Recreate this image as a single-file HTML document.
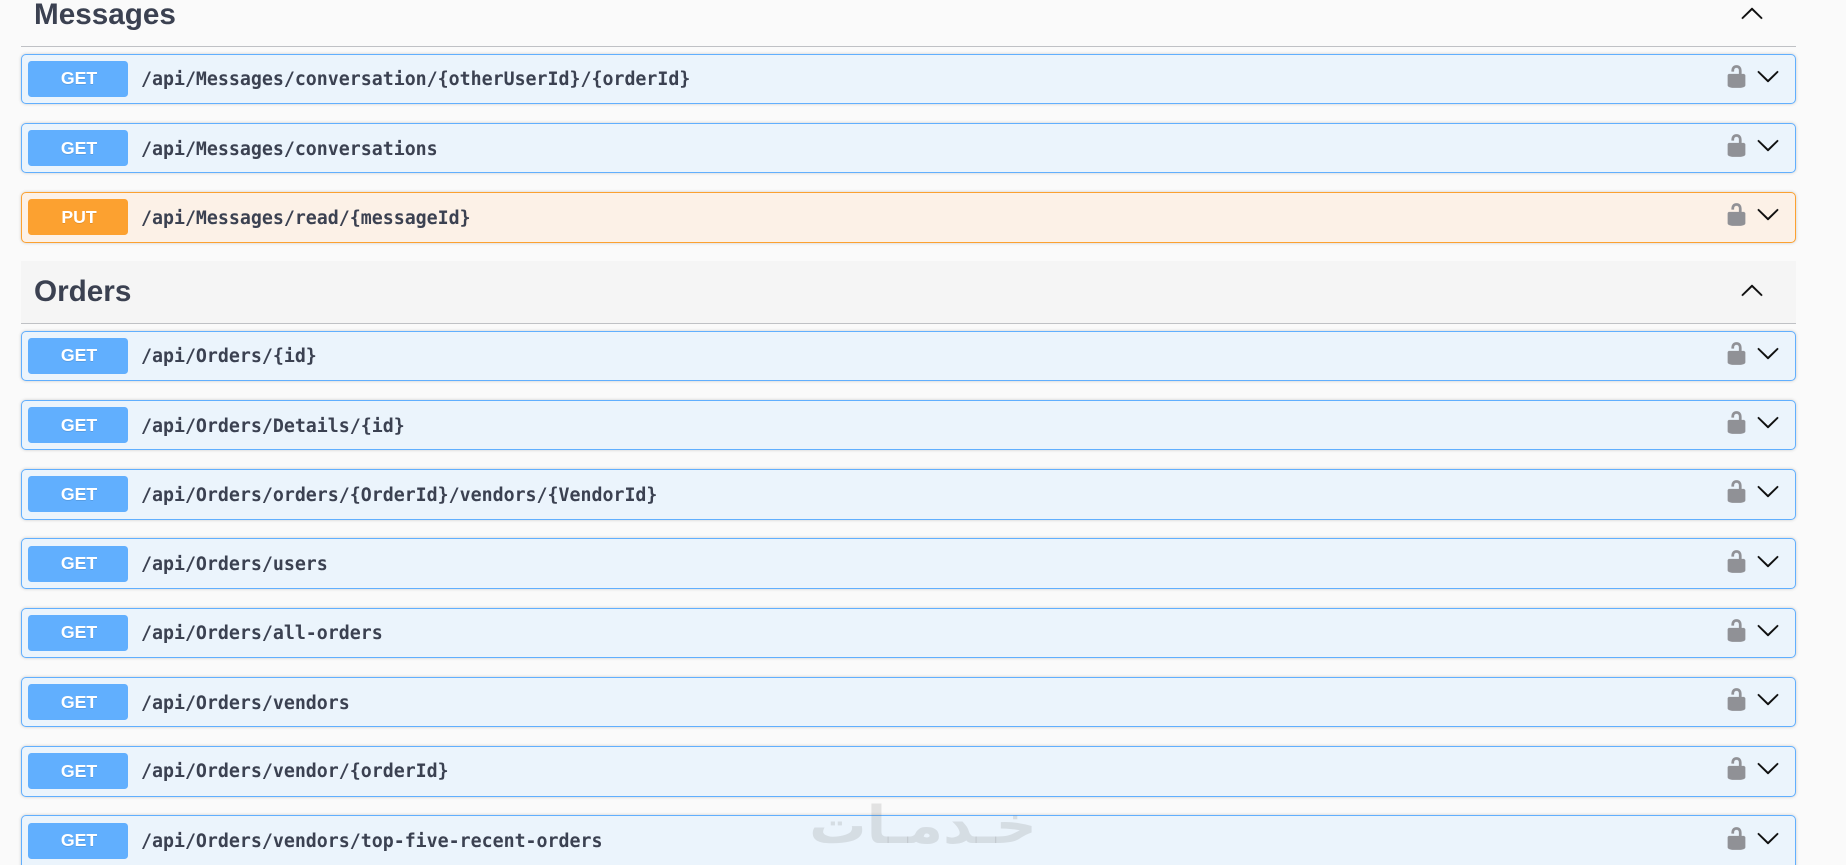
<!DOCTYPE html>
<html><head><meta charset="utf-8"><style>
html,body{margin:0;padding:0;width:1846px;height:865px;overflow:hidden;background:#fafafa}
body{position:relative;font-family:"Liberation Sans",sans-serif}
.h{position:absolute;left:34px;font-weight:700;font-size:29.7px;line-height:33px;color:#3b4151}
.ln{position:absolute;left:21px;width:1775px;height:1px;background:#bfc1c5}
.hb{position:absolute;left:21px;width:1775px;top:261px;height:62px;background:#f5f5f5}
.r{position:absolute;left:21px;width:1775px;box-sizing:border-box;border:1px solid #61affe;border-radius:5px;background:#ebf4fc;box-shadow:0 0 3px rgba(0,0,0,.19)}
.r.p{border-color:#fca130;background:#fcf1e7}
.b{position:absolute;left:28px;width:100px;height:36px;border-radius:3.5px;background:#61affe}
.b.o{background:#fca130}
.g{position:absolute;left:29px;width:100px;text-align:center;color:#fff;font-weight:700;font-size:17.7px;line-height:20px;text-shadow:0 1px 0 rgba(0,0,0,.1)}
.t{position:absolute;left:141px;font-family:"DejaVu Sans Mono","Liberation Mono",monospace;font-weight:700;font-size:18.25px;line-height:21px;color:#3b4151;white-space:pre}
.l{position:absolute;left:1724px;width:25px;height:25px;fill:#909196;stroke:#909196;stroke-width:.2}
.c{position:absolute;left:1756px;width:24px;height:24px;fill:#111;stroke:#111;stroke-width:.25}
.u{position:absolute;left:1740px;width:24px;height:24px;fill:#111;stroke:#111;stroke-width:.25;transform:rotate(180deg)}
.w{position:absolute;left:773px;top:796px;width:300px;height:60px;text-align:center;font-family:"DejaVu Sans",sans-serif;font-weight:700;font-size:52px;line-height:60px;color:rgba(107,107,107,.17);transform:scaleX(1.1);white-space:nowrap}
</style></head><body>
<svg width="0" height="0" style="position:absolute"><defs>
<symbol id="lk" viewBox="0 0 20 20"><path d="M15.8 8H14V5.6C14 2.703 12.665 1 10 1 7.334 1 6 2.703 6 5.6V6h2v-.801C8 3.754 8.797 3 10 3c1.203 0 2 .754 2 2.199V8H4c-.553 0-1 .646-1 1.199V17c0 .549.428 1.139.951 1.307l1.197.387C5.672 18.861 6.55 19 7.1 19h5.8c.549 0 1.428-.139 1.951-.307l1.196-.387c.524-.167.953-.757.953-1.306V9.199C17 8.646 16.352 8 15.8 8z"/></symbol>
<symbol id="ch" viewBox="0 0 20 20"><path d="M17.418 6.109c.272-.268.709-.268.979 0s.271.701 0 .969l-7.908 7.83c-.27.268-.707.268-.979 0l-7.908-7.83c-.27-.268-.27-.701 0-.969.271-.268.709-.268.979 0L10 13.25l7.418-7.141z"/></symbol>
</defs></svg>

<div class="h" style="top:-2px">Messages</div>
<svg class="u" style="top:2px"><use href="#ch"/></svg>
<div class="ln" style="top:46px"></div>

<div class="r" style="top:54px;height:50px"></div><div class="b" style="top:61px"></div><div class="g" style="top:68px">GET</div><div class="t" style="top:69px">/api/Messages/conversation/{otherUserId}/{orderId}</div><svg class="l" style="top:64px"><use href="#lk"/></svg><svg class="c" style="top:64.3px"><use href="#ch"/></svg>

<div class="r" style="top:123px;height:50px"></div><div class="b" style="top:130px"></div><div class="g" style="top:138px">GET</div><div class="t" style="top:139px">/api/Messages/conversations</div><svg class="l" style="top:133px"><use href="#lk"/></svg><svg class="c" style="top:133.3px"><use href="#ch"/></svg>

<div class="r p" style="top:192px;height:51px"></div><div class="b o" style="top:199px"></div><div class="g" style="top:207px">PUT</div><div class="t" style="top:208px">/api/Messages/read/{messageId}</div><svg class="l" style="top:202px"><use href="#lk"/></svg><svg class="c" style="top:202.3px"><use href="#ch"/></svg>

<div class="hb"></div>
<div class="h" style="top:275px">Orders</div>
<svg class="u" style="top:279px"><use href="#ch"/></svg>
<div class="ln" style="top:323px"></div>

<div class="r" style="top:331px;height:50px"></div><div class="b" style="top:338px"></div><div class="g" style="top:345px">GET</div><div class="t" style="top:346px">/api/Orders/{id}</div><svg class="l" style="top:341px"><use href="#lk"/></svg><svg class="c" style="top:341.3px"><use href="#ch"/></svg>

<div class="r" style="top:400px;height:50px"></div><div class="b" style="top:407px"></div><div class="g" style="top:415px">GET</div><div class="t" style="top:416px">/api/Orders/Details/{id}</div><svg class="l" style="top:410px"><use href="#lk"/></svg><svg class="c" style="top:410.3px"><use href="#ch"/></svg>

<div class="r" style="top:469px;height:51px"></div><div class="b" style="top:476px"></div><div class="g" style="top:484px">GET</div><div class="t" style="top:485px">/api/Orders/orders/{OrderId}/vendors/{VendorId}</div><svg class="l" style="top:479px"><use href="#lk"/></svg><svg class="c" style="top:479.3px"><use href="#ch"/></svg>

<div class="r" style="top:538px;height:51px"></div><div class="b" style="top:546px"></div><div class="g" style="top:553px">GET</div><div class="t" style="top:554px">/api/Orders/users</div><svg class="l" style="top:549px"><use href="#lk"/></svg><svg class="c" style="top:549.3px"><use href="#ch"/></svg>

<div class="r" style="top:608px;height:50px"></div><div class="b" style="top:615px"></div><div class="g" style="top:622px">GET</div><div class="t" style="top:623px">/api/Orders/all-orders</div><svg class="l" style="top:618px"><use href="#lk"/></svg><svg class="c" style="top:618.3px"><use href="#ch"/></svg>

<div class="r" style="top:677px;height:50px"></div><div class="b" style="top:684px"></div><div class="g" style="top:692px">GET</div><div class="t" style="top:693px">/api/Orders/vendors</div><svg class="l" style="top:687px"><use href="#lk"/></svg><svg class="c" style="top:687.3px"><use href="#ch"/></svg>

<div class="r" style="top:746px;height:51px"></div><div class="b" style="top:753px"></div><div class="g" style="top:761px">GET</div><div class="t" style="top:761px">/api/Orders/vendor/{orderId}</div><svg class="l" style="top:756px"><use href="#lk"/></svg><svg class="c" style="top:756.3px"><use href="#ch"/></svg>

<div class="r" style="top:815px;height:60px"></div><div class="b" style="top:823px"></div><div class="g" style="top:830px">GET</div><div class="t" style="top:831px">/api/Orders/vendors/top-five-recent-orders</div><svg class="l" style="top:826px"><use href="#lk"/></svg><svg class="c" style="top:826.3px"><use href="#ch"/></svg>

<div class="w" lang="fa" dir="rtl">خـدمـات</div>
</body></html>
